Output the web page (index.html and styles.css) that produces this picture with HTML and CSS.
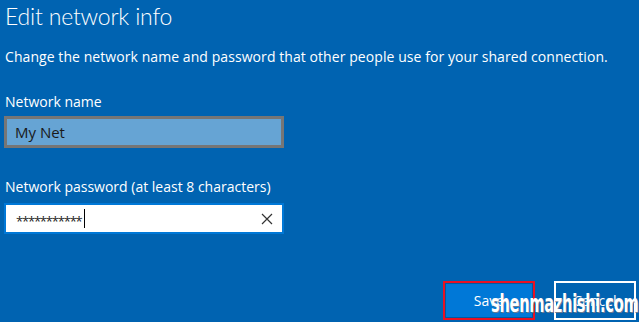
FILE: index.html
```html
<!DOCTYPE html>
<html lang="en">
<head>
    <meta charset="UTF-8">
    <meta name="viewport" content="width=device-width, initial-scale=1.0">
    <title>Edit network info</title>
    <link rel="stylesheet" href="styles.css">
</head>
<body>
    <div class="panel">
        <h1 class="title">Edit network info</h1>
        <p class="intro">Change the network name and password that other people use for your shared connection.</p>

        <label class="field-label">Network name</label>
        <div class="input input-name">My Net</div>

        <label class="field-label label-pass">Network password (at least 8 characters)</label>
        <div class="input input-pass">
            <span class="stars">***********</span><span class="caret"></span>
            <svg class="clear" width="12" height="12" viewBox="0 0 12 12">
                <path d="M1 1 L11 11 M11 1 L1 11" stroke="#333" stroke-width="1.2" fill="none"/>
            </svg>
        </div>

        <div class="actions">
            <button class="btn btn-save">Save</button>
            <button class="btn btn-cancel">Cancel</button>
        </div>
    </div>
    <div class="watermark">shenmazhishi.com</div>
</body>
</html>
```

FILE: styles.css
```css
/* Edit network info dialog */
body {
    margin: 0;
    width: 639px;
    height: 322px;
    overflow: hidden;
    background: #0063b1;
    color: #fff;
    font-family: 'Open Sans', sans-serif;
    position: relative;
}

.panel {
    padding: 0 0 0 4px;
}

.title {
    margin: 0;
    padding: 1px 0 0 1px;
    font-family: 'Lato', 'Open Sans', sans-serif;
    font-size: 23px;
    font-weight: 300;
    letter-spacing: -0.2px;
    line-height: 30px;
}

.intro {
    margin: 16px 0 0 1px;
    font-size: 14px;
    letter-spacing: 0.07px;
    line-height: 20px;
}

.field-label {
    display: block;
    margin: 25px 0 0 1px;
    font-size: 14px;
    line-height: 20px;
}

.label-pass {
    margin-top: 29px;
}

.input {
    box-sizing: border-box;
    width: 280px;
    display: flex;
    align-items: center;
    font-size: 15px;
}

.input-name {
    height: 32px;
    margin-top: 4px;
    border: 3px solid #767676;
    background: #66a4d4;
    color: #1a1a1a;
    padding-left: 8px;
}

.input-pass {
    height: 31px;
    margin-top: 6px;
    border: 2px solid #0078d7;
    background: #fff;
    color: #222;
    padding-left: 10px;
}

.stars {
    font-size: 13px;
    letter-spacing: -1.2px;
    padding-top: 4px;
}

.caret {
    width: 1px;
    height: 19px;
    background: #000;
    margin-left: 2px;
}

.clear {
    margin-left: auto;
    margin-right: 9px;
}

.actions {
    display: flex;
    justify-content: flex-end;
    gap: 19px;
    margin-top: 47px;
    padding-right: 3px;
}

.btn {
    box-sizing: border-box;
    height: 39px;
    font-family: inherit;
    font-size: 14px;
    color: #fff;
    cursor: pointer;
}

.btn-save {
    width: 92px;
    border: 2px solid #e81123;
    background: #0078d7;
    box-shadow: inset 0 0 0 1px #005aa3;
}

.btn-cancel {
    width: 82px;
    border: 2px solid #fff;
    background: transparent;
}

.watermark {
    position: absolute;
    left: 491px;
    top: 291px;
    font-family: 'DejaVu Sans', sans-serif;
    font-weight: bold;
    font-size: 24px;
    line-height: 26px;
    letter-spacing: -0.5px;
    color: #fff;
    text-shadow: 1px 1px 0 #6a7a90;
    transform: scaleX(0.61);
    transform-origin: left top;
}
```
